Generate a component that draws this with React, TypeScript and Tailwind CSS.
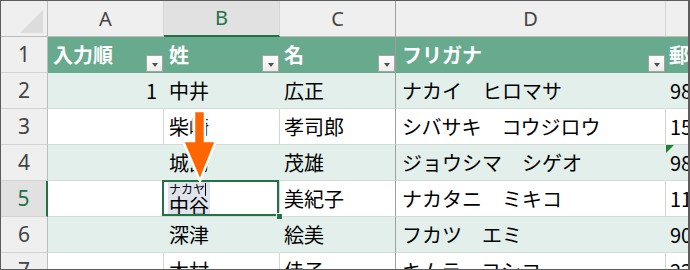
import React from 'react';

type Row = { n: number; a?: string; b: string; c: string; d: string; e: string };

const rows: Row[] = [
  { n: 2, a: '1', b: '中井', c: '広正', d: 'ナカイ　ヒロマサ', e: '98' },
  { n: 3, b: '柴崎', c: '孝司郎', d: 'シバサキ　コウジロウ', e: '15' },
  { n: 4, b: '城島', c: '茂雄', d: 'ジョウシマ　シゲオ', e: '98' },
  { n: 5, b: '中谷', c: '美紀子', d: 'ナカタニ　ミキコ', e: '11' },
  { n: 6, b: '深津', c: '絵美', d: 'フカツ　エミ', e: '90' },
  { n: 7, b: '木村', c: '佳子', d: 'キムラ　ヨシコ', e: '22' },
];

const FilterButton = () => (
  <div className="ml-auto self-end mb-[1px] w-[17px] h-[17px] shrink-0 flex items-center justify-center bg-gradient-to-b from-white to-[#ececec] border border-[#a3a3a3]">
    <div className="w-0 h-0 border-l-[3px] border-r-[3px] border-t-[4px] border-l-transparent border-r-transparent border-t-[#505050] mt-[2px]" />
  </div>
);

const DataRow = ({ row }: { row: Row }) => {
  const band = row.n % 2 === 0;
  const active = row.n === 5;
  const bg = band ? 'bg-[#e2efea]' : 'bg-white';
  const grid = band ? 'border-r-transparent' : 'border-r-[#d4d4d4]';

  return (
    <div className="flex h-[36px] shrink-0 text-[20px] text-black">
      <div
        className={
          active
            ? 'w-[47px] shrink-0 flex items-center justify-center bg-[#e1e1e1] text-[#217346] border-r-2 border-r-[#217346] border-b border-b-[#d4d4d4] font-["Noto_Sans",sans-serif] text-[21px]'
            : 'w-[47px] shrink-0 flex items-center justify-center bg-[#efefef] text-[#444] border-r border-r-[#bdbdbd] border-b border-b-[#d4d4d4] font-["Noto_Sans",sans-serif] text-[21px]'
        }
      >
        {row.n}
      </div>
      <div className={`w-[116px] shrink-0 flex items-center justify-end pr-[6px] border-r border-b border-b-[#d3dbd7] ${bg} ${grid}`}>
        {row.a}
      </div>
      {active ? (
        <div className={`relative w-[116px] shrink-0 flex pl-[4px] pt-[1px] border-r border-b border-b-[#d3dbd7] ${bg} ${grid}`}>
          <div className="bg-[#dfe3ec] px-[1px] flex flex-col">
            <div className="flex items-center h-[14px] text-[12px] leading-[12px]">
              <span>ナカヤ</span>
              <span className="w-px h-[13px] bg-black" />
            </div>
            <div className="leading-[20px]">{row.b}</div>
          </div>
          <div className="absolute -left-[2px] -top-[1px] right-0 bottom-0 border-2 border-[#217346]" />
          <div className="absolute -right-[4px] -bottom-[4px] w-[7px] h-[7px] bg-[#217346] border border-white" />
        </div>
      ) : (
        <div className={`w-[116px] shrink-0 flex items-center pl-[5px] border-r border-b border-b-[#d3dbd7] ${bg} ${grid}`}>
          {row.b}
        </div>
      )}
      <div className={`w-[116px] shrink-0 flex items-center pl-[4px] border-r border-r-[#9e9e9e] border-b border-b-[#d3dbd7] ${bg}`}>
        {row.c}
      </div>
      <div className={`w-[270px] shrink-0 flex items-center pl-[6px] whitespace-nowrap border-r border-b border-b-[#d3dbd7] ${bg} ${grid}`}>
        {row.d}
      </div>
      <div className={`relative flex-1 flex items-center pl-[4px] overflow-hidden whitespace-nowrap border-b border-b-[#d3dbd7] ${bg}`}>
        {row.n === 4 && (
          <div className="absolute top-0 left-0 w-0 h-0 border-t-[8px] border-t-[#1e8035] border-r-[8px] border-r-transparent" />
        )}
        {row.e}
      </div>
    </div>
  );
};

const App = () => {
  return (
    <div className="relative w-[690px] h-[270px] overflow-hidden flex flex-col bg-white border-t border-l border-b border-r-2 border-[#5c5c5c] font-['Noto_Sans_CJK_JP',sans-serif]">
      {/* column letters */}
      <div className="flex h-[36px] shrink-0 bg-[#efefef] text-[20px] text-[#444] font-['Noto_Sans',sans-serif]">
        <div className="w-[47px] shrink-0 flex items-end justify-end pr-[4px] pb-[3px] border-r border-r-[#bdbdbd] border-b border-b-[#bdbdbd]">
          <div className="w-0 h-0 border-l-[23px] border-l-transparent border-b-[23px] border-b-[#dcdcdc]" />
        </div>
        <div className="w-[116px] shrink-0 flex items-center justify-center border-r border-r-[#d5d5d5] border-b border-b-[#bdbdbd]">A</div>
        <div className="w-[116px] shrink-0 flex items-center justify-center bg-[#e1e1e1] text-[#217346] border-r border-r-[#d5d5d5] border-b-2 border-b-[#217346]">B</div>
        <div className="w-[116px] shrink-0 flex items-center justify-center border-r border-r-[#9e9e9e] border-b border-b-[#bdbdbd]">C</div>
        <div className="w-[270px] shrink-0 flex items-center justify-center border-r border-r-[#d5d5d5] border-b border-b-[#bdbdbd]">D</div>
        <div className="flex-1 border-b border-b-[#bdbdbd]" />
      </div>

      {/* table header row */}
      <div className="flex h-[36px] shrink-0 text-[20px] font-bold text-white">
        <div className="w-[47px] shrink-0 flex items-center justify-center bg-[#efefef] text-[#444] font-normal text-[21px] font-['Noto_Sans',sans-serif] border-r border-r-[#bdbdbd] border-b border-b-[#d4d4d4]">1</div>
        <div className="w-[116px] shrink-0 flex pl-[5px] bg-[#68aa8e] border-r border-r-transparent">
          <span className="self-center">入力順</span>
          <FilterButton />
        </div>
        <div className="w-[116px] shrink-0 flex pl-[5px] bg-[#68aa8e] border-r border-r-transparent">
          <span className="self-center">姓</span>
          <FilterButton />
        </div>
        <div className="w-[116px] shrink-0 flex pl-[4px] bg-[#68aa8e] border-r border-r-[#9e9e9e]">
          <span className="self-center">名</span>
          <FilterButton />
        </div>
        <div className="w-[270px] shrink-0 flex pl-[6px] bg-[#68aa8e] border-r border-r-transparent">
          <span className="self-center">フリガナ</span>
          <FilterButton />
        </div>
        <div className="flex-1 flex pl-[3px] bg-[#68aa8e] overflow-hidden whitespace-nowrap">
          <span className="self-center">郵便番号</span>
        </div>
      </div>

      {rows.map((row) => (
        <DataRow key={row.n} row={row} />
      ))}

      {/* orange arrow */}
      <svg className="absolute left-[178px] top-[105px] w-[42px] h-[80px]" viewBox="0 0 42 80">
        <polygon
          points="15,5 26,5 26,35 37,35 21,75 4,35 15,35"
          fill="#ff6600"
          stroke="#ffffff"
          strokeWidth="2.5"
          strokeLinejoin="miter"
        />
      </svg>
    </div>
  );
};

export default App;
